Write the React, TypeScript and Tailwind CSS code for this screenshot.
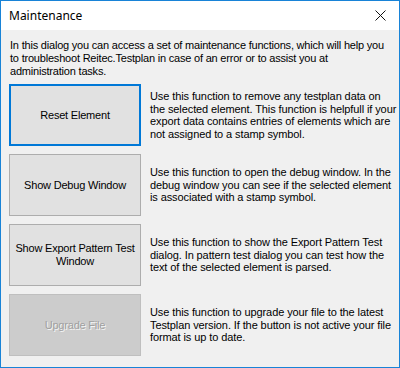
import React from 'react';

interface ActionRow {
    label: string[];
    lines: string[];
    focused?: boolean;
    disabled?: boolean;
}

// line breaks follow the original dialog
const ROWS: ActionRow[] = [
    {
        label: ['Reset Element'],
        lines: [
            'Use this function to remove any testplan data on',
            'the selected element. This function is helpfull if your',
            'export data contains entries of elements which are',
            'not assigned to a stamp symbol.',
        ],
        focused: true,
    },
    {
        label: ['Show Debug Window'],
        lines: [
            'Use this function to open the debug window. In the',
            'debug window you can see if the selected element',
            'is associated with a stamp symbol.',
        ],
    },
    {
        label: ['Show Export Pattern Test', 'Window'],
        lines: [
            'Use this function to show the Export Pattern Test',
            'dialog. In pattern test dialog you can test how the',
            'text of the selected element is parsed.',
        ],
    },
    {
        label: ['Upgrade File'],
        lines: [
            'Use this function to upgrade your file to the latest',
            'Testplan version. If the button is not active your file',
            'format is up to date.',
        ],
        disabled: true,
    },
];

const App = () => {
    return (
        <div className="w-[400px] h-[368px] flex flex-col border border-[#1883d7] bg-[#f0f0f0] font-['Liberation_Sans',Arial,sans-serif] text-[11px] tracking-[-0.2px] text-black overflow-hidden">
            {/* Title bar */}
            <div className="h-[29px] bg-white flex items-center justify-between pl-[8px] pr-[11px] flex-shrink-0 tracking-normal">
                <span className="text-[12px] font-['Noto_Sans',sans-serif] text-black">Maintenance</span>
                <svg width="11" height="11" viewBox="0 0 11 11" className="mr-[2px]">
                    <path d="M0.5 0.5 L10.5 10.5 M10.5 0.5 L0.5 10.5" stroke="#111" strokeWidth="1" fill="none" />
                </svg>
            </div>

            {/* Body */}
            <div className="flex-grow flex flex-col px-[8px] pt-[9px]">
                <p className="leading-[13px] pl-[1px]">
                    In this dialog you can access a set of maintenance functions, which will help you to troubleshoot Reitec.Testplan in case of an error or to assist you at administration tasks.
                </p>

                <div className="flex flex-col gap-[8px] mt-[6px]">
                    {ROWS.map((row, i) => (
                        <div key={i} className="flex items-center gap-[9px]">
                            <button
                                disabled={row.disabled}
                                className={`w-[132px] h-[62px] flex-shrink-0 flex flex-col items-center justify-center text-center leading-[13px] 
                                    ${row.focused ? 'border-2 border-[#0078d7] bg-[#e1e1e1]' : ''}
                                    ${row.disabled ? 'border border-[#bfbfbf] bg-[#cccccc] text-[#a0a0a0] [text-shadow:1px_1px_0_#f5f5f5]' : ''}
                                    ${!row.focused && !row.disabled ? 'border border-[#adadad] bg-[#e1e1e1]' : ''}`}
                            >
                                {row.label.map(l => (
                                    <span key={l}>{l}</span>
                                ))}
                            </button>
                            <div className="flex-1 flex flex-col leading-[12.5px] whitespace-nowrap tracking-[-0.1px]">
                                {row.lines.map(l => (
                                    <span key={l}>{l}</span>
                                ))}
                            </div>
                        </div>
                    ))}
                </div>
            </div>
        </div>
    );
};

export default App;
